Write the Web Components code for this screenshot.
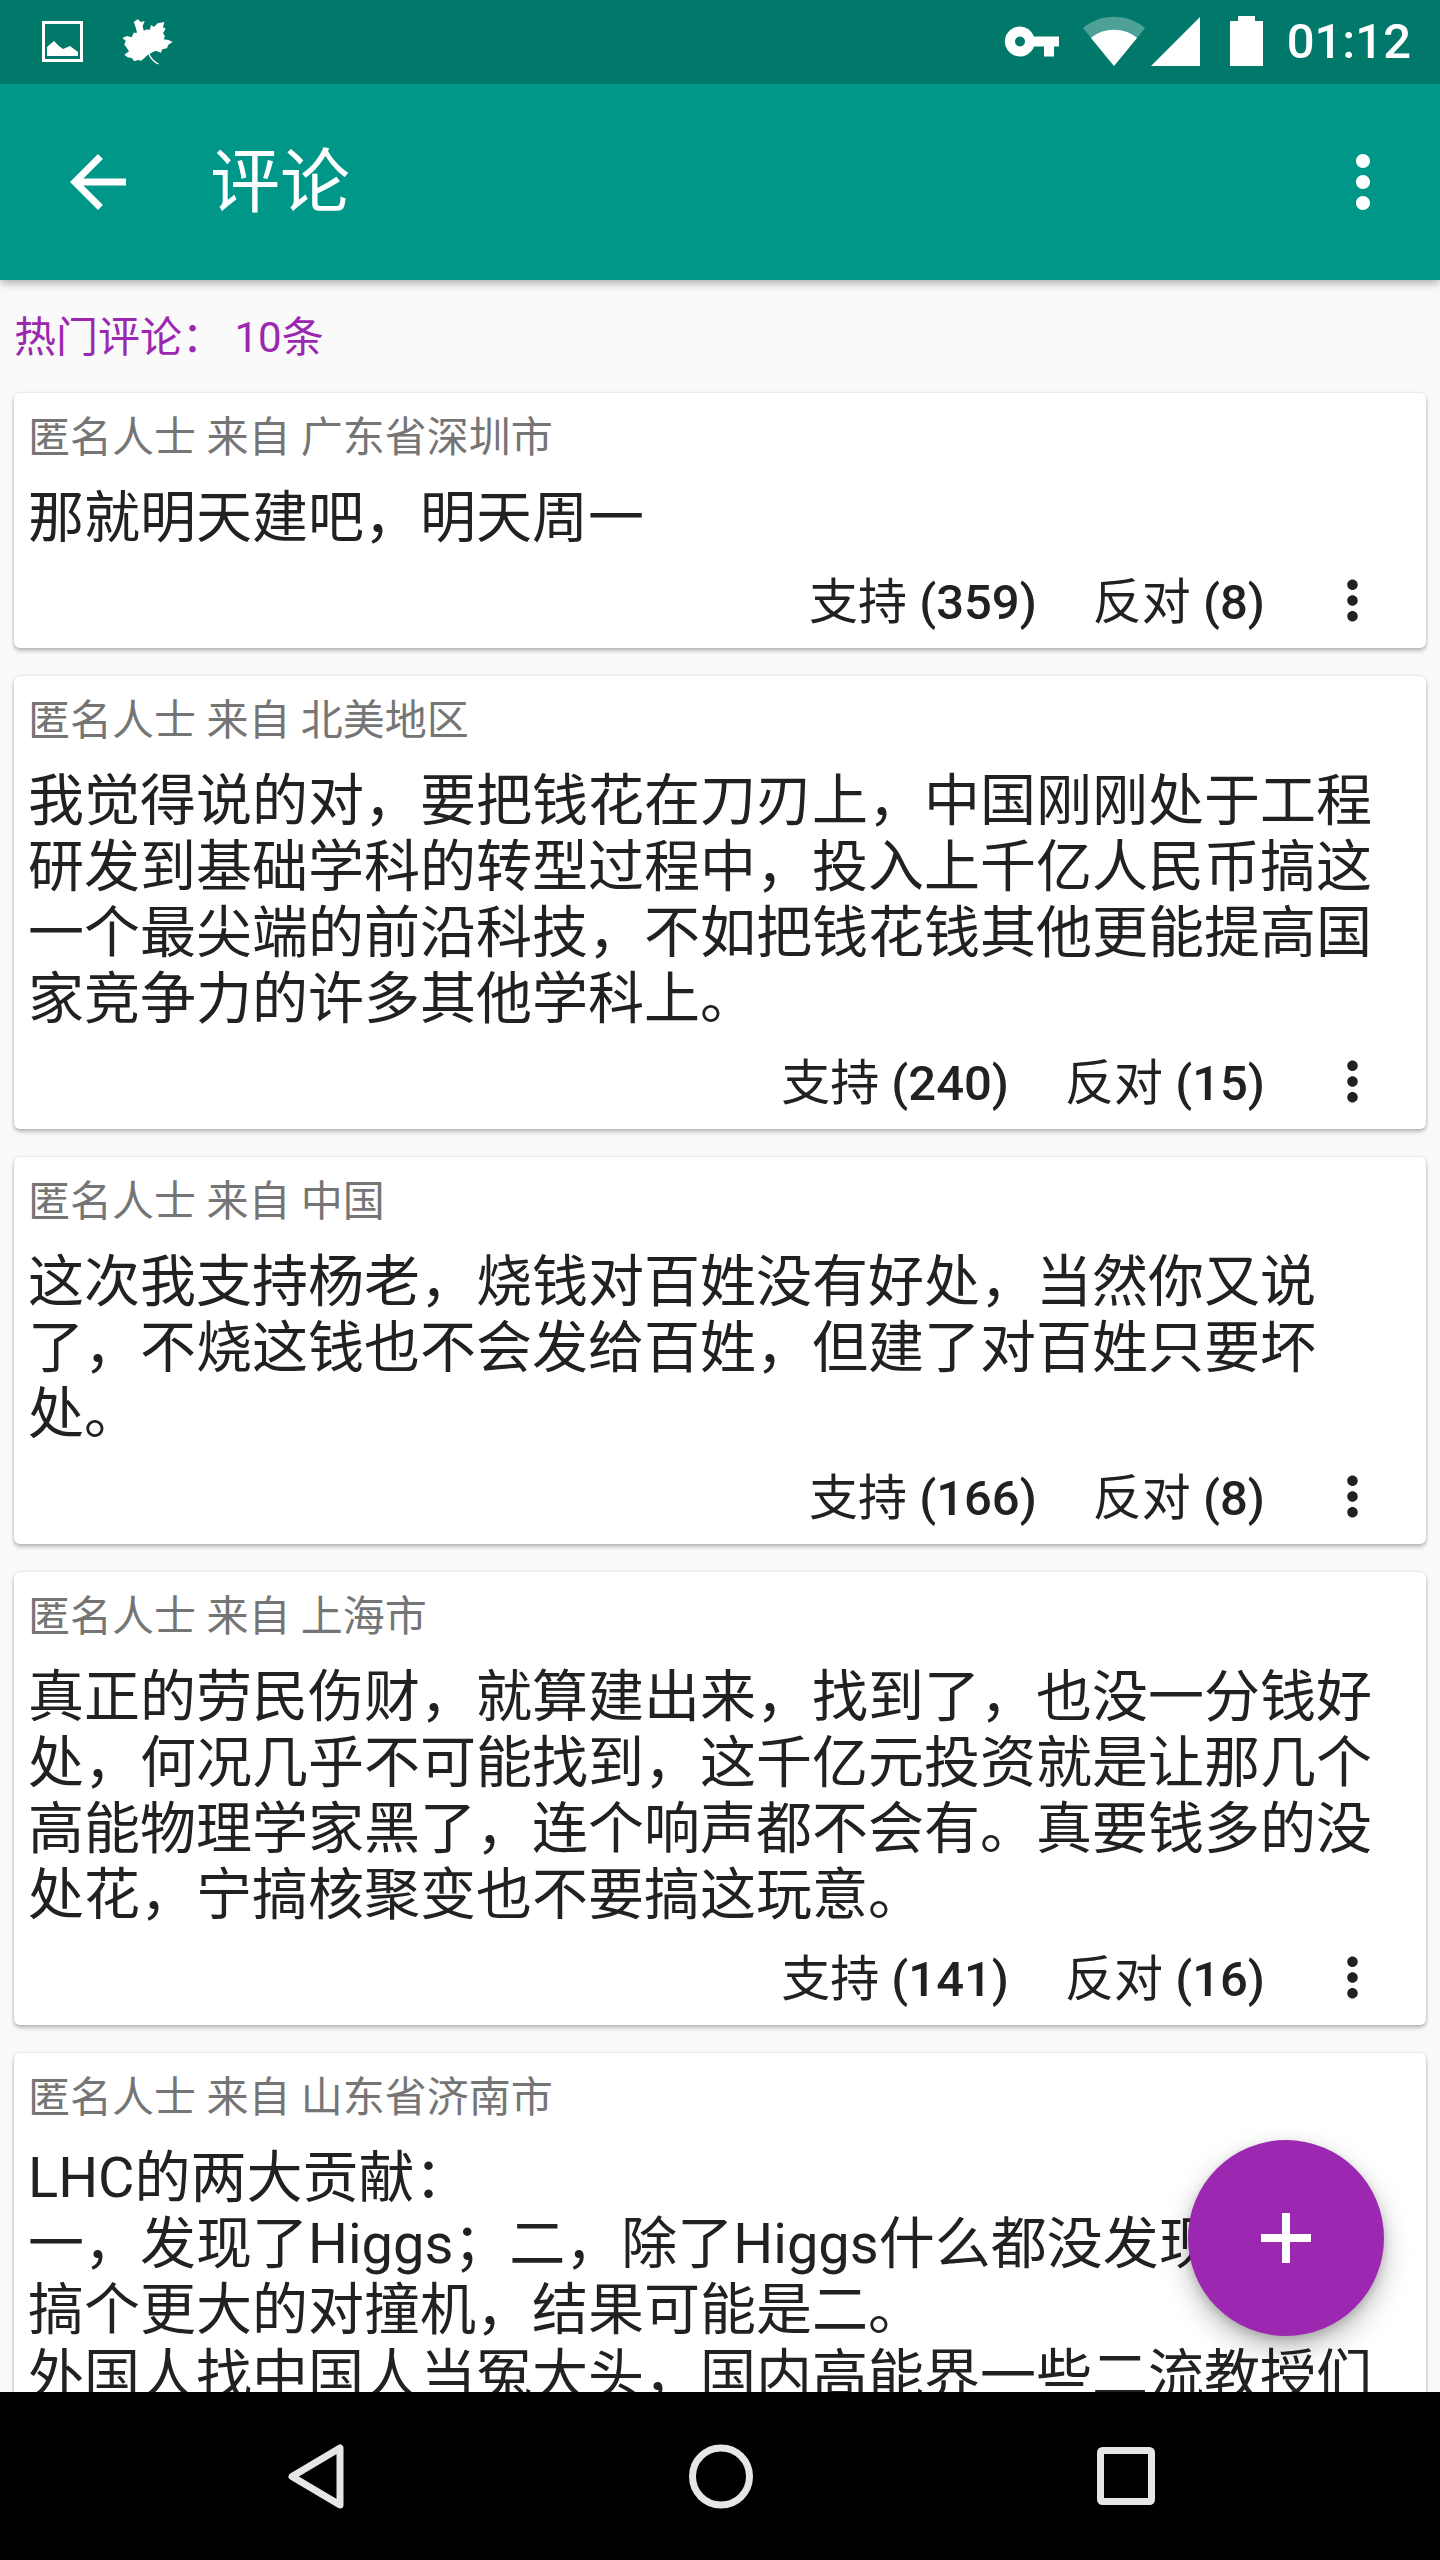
<!DOCTYPE html>
<html lang="zh">
<head>
<meta charset="utf-8">
<title>评论</title>
<style>
  html, body { margin: 0; padding: 0; background: #000; }
  body { font-family: Roboto, "Noto Sans CJK SC", sans-serif; }
</style>
</head>
<body>
<app-screen>
  <status-bar slot="top" time="01:12"></status-bar>
  <app-toolbar slot="top" titulo="评论"></app-toolbar>

  <section-label>热门评论&#xFF1A; 10条</section-label>

  <comment-card from="匿名人士 来自 广东省深圳市" up="359" down="8">那就明天建吧&#xFF0C;明天周一</comment-card>
  <comment-card from="匿名人士 来自 北美地区" up="240" down="15">我觉得说的对&#xFF0C;要把钱花在刀刃上&#xFF0C;中国刚刚处于工程研发到基础学科的转型过程中&#xFF0C;投入上千亿人民币搞这一个最尖端的前沿科技&#xFF0C;不如把钱花钱其他更能提高国家竞争力的许多其他学科上。</comment-card>
  <comment-card from="匿名人士 来自 中国" up="166" down="8">这次我支持杨老&#xFF0C;烧钱对百姓没有好处&#xFF0C;当然你又说了&#xFF0C;不烧这钱也不会发给百姓&#xFF0C;但建了对百姓只要坏处。</comment-card>
  <comment-card from="匿名人士 来自 上海市" up="141" down="16">真正的劳民伤财&#xFF0C;就算建出来&#xFF0C;找到了&#xFF0C;也没一分钱好处&#xFF0C;何况几乎不可能找到&#xFF0C;这千亿元投资就是让那几个高能物理学家黑了&#xFF0C;连个响声都不会有。真要钱多的没处花&#xFF0C;宁搞核聚变也不要搞这玩意。</comment-card>
  <comment-card from="匿名人士 来自 山东省济南市" up="98" down="7">LHC的两大贡献&#xFF1A;<br>一&#xFF0C;发现了Higgs&#xFF1B;二&#xFF0C;除了Higgs什么都没发现。<br>搞个更大的对撞机&#xFF0C;结果可能是二。<br>外国人找中国人当冤大头&#xFF0C;国内高能界一些二流教授们</comment-card>

  <fab-button slot="overlay"></fab-button>
  <nav-bar slot="bottom"></nav-bar>
</app-screen>

<script>
const MORE_PATH = 'M12 8c1.1 0 2-.9 2-2s-.9-2-2-2-2 .9-2 2 .9 2 2 2zm0 2c-1.1 0-2 .9-2 2s.9 2 2 2 2-.9 2-2-.9-2-2-2zm0 6c-1.1 0-2 .9-2 2s.9 2 2 2 2-.9 2-2-.9-2-2-2z';

class AppScreen extends HTMLElement {
  constructor() {
    super();
    this.attachShadow({ mode: 'open' });
    this.shadowRoot.innerHTML = `
    <style>
      :host { display: flex; flex-direction: column; position: relative; width: 1440px; height: 2560px; overflow: hidden; background: #fafafa; }
      .top { position: relative; z-index: 2; box-shadow: 0 3px 9px rgba(0,0,0,.32); }
      main { flex: 1; min-height: 0; overflow: hidden; padding: 0 14px; display: flex; flex-direction: column; gap: 28px; }
      .bottom { position: relative; z-index: 3; }
    </style>
    <div class="top"><slot name="top"></slot></div>
    <main><slot></slot></main>
    <slot name="overlay"></slot>
    <div class="bottom"><slot name="bottom"></slot></div>
    `;
  }
}

class StatusBar extends HTMLElement {
  constructor() {
    super();
    this.attachShadow({ mode: 'open' });
  }
  connectedCallback() {
    const time = this.getAttribute('time') || '';
    this.shadowRoot.innerHTML = `
    <style>
      :host { display: flex; align-items: center; height: 84px; background: #00796b; color: #fff; padding: 0 29px 0 42px; }
      svg { display: block; height: 84px; flex: none; fill: #fff; }
      .left { display: flex; gap: 39px; flex: 1; }
      .right { display: flex; align-items: center; }
      .time { font: 500 49px/84px Roboto, sans-serif; margin-left: 24px; }
    </style>
    <div class="left">
      <svg width="41" viewBox="0 0 41 84">
        <path fill-rule="evenodd" d="M0 21h41v41H0zM3 24v35h35V24z"/>
        <path d="M5 56V47l7-6 5 5 4 3 7-3 8 6v4z"/>
      </svg>
      <svg width="52" viewBox="275 -30 156 252">
        <path d="M322 28L332 36 343 33 337 48 340 62 350 58 358 60 362 46 372 50 382 40 402 36 398 52 406 56 398 70 404 78 400 88 414 90 427 96 414 104 410 115 396 118 392 128 376 122 364 128 352 135 340 146 332 152 322 150 312 154 304 144 292 142 282 134 296 124 288 112 282 104 286 92 276 84 290 78 304 82 310 68 320 68 316 52 310 36z"/>
        <path fill="none" stroke="#fff" stroke-width="4" d="M355 130c5 14 15 26 30 32"/>
      </svg>
    </div>
    <div class="right">
      <svg width="55" viewBox="0 0 55 84">
        <path fill-rule="evenodd" d="M16 26.500a15 15 0 0 1 14 10h25v10h-5v10H40V46.500H30a15 15 0 1 1-14-20zM16 36.500a5 5 0 1 0 .01 0z"/>
      </svg>
      <svg width="62" viewBox="0 0 62 84" style="margin-left:24px">
        <path opacity=".3" d="M31 66L0 28C18 13 44 13 62 28z"/>
        <path d="M31 66L8 38C20 27 42 27 54 38z"/>
      </svg>
      <svg width="49" viewBox="0 0 49 84" style="margin-left:6px">
        <path d="M49 17v49H0z"/>
      </svg>
      <svg width="33" viewBox="0 0 33 84" style="margin-left:30px">
        <path d="M8 16h17v5h8v45H0V21h8z"/>
      </svg>
      <span class="time">${time}</span>
    </div>
    `;
  }
}

class AppToolbar extends HTMLElement {
  constructor() {
    super();
    this.attachShadow({ mode: 'open' });
  }
  connectedCallback() {
    const titulo = this.getAttribute('titulo') || '';
    this.shadowRoot.innerHTML = `
    <style>
      :host { display: flex; align-items: center; height: 196px; background: #009688; color: #fff; padding: 0 35px 0 56px; }
      svg { display: block; width: 84px; height: 84px; fill: #fff; flex: none; }
      h1 { flex: 1; margin: 2px 0 0 70px; font: 400 70px/84px Roboto, "Noto Sans CJK SC", sans-serif; }
    </style>
    <svg viewBox="0 0 24 24"><path d="M20 11H7.830l5.590-5.590L12 4l-8 8 8 8 1.410-1.410L7.830 13H20v-2z"/></svg>
    <h1>${titulo}</h1>
    <svg viewBox="0 0 24 24"><path d="${MORE_PATH}"/></svg>
    `;
  }
}

class SectionLabel extends HTMLElement {
  constructor() {
    super();
    this.attachShadow({ mode: 'open' });
    this.shadowRoot.innerHTML = `
    <style>
      :host { display: block; flex: none; padding-top: 30px; margin-bottom: -1px; color: #9c27b0; font: 400 42px/56px Roboto, "Noto Sans CJK SC", sans-serif; }
    </style>
    <slot></slot>
    `;
  }
}

class CommentCard extends HTMLElement {
  constructor() {
    super();
    this.attachShadow({ mode: 'open' });
  }
  connectedCallback() {
    const from = this.getAttribute('from') || '';
    const up = this.getAttribute('up') || '0';
    const down = this.getAttribute('down') || '0';
    this.shadowRoot.innerHTML = `
    <style>
      :host { display: block; flex: none; background: #fff; border-radius: 6px; padding: 17px 14px 6px; box-shadow: 0 3px 4px rgba(0,0,0,.24), 0 0 3px rgba(0,0,0,.14); font-family: Roboto, "Noto Sans CJK SC", sans-serif; }
      .from { color: #757575; font-size: 42px; line-height: 56px; }
      .text { color: #212121; font-size: 56px; line-height: 66px; margin-top: 19px; }
      .actions { display: flex; align-items: center; justify-content: flex-end; height: 84px; margin-top: 7px; padding-right: 28px; color: #212121; font-size: 49px; font-weight: 500; }
      .actions b { font-weight: 400; }
      .actions span { margin-bottom: 6px; }
      .actions span + span { margin-left: 56px; }
      svg { display: block; width: 63px; height: 63px; fill: #212121; margin-left: 56px; flex: none; }
    </style>
    <div class="from">${from}</div>
    <div class="text"><slot></slot></div>
    <div class="actions">
      <span><b>支持</b> (${up})</span>
      <span><b>反对</b> (${down})</span>
      <svg viewBox="0 0 24 24"><path d="${MORE_PATH}"/></svg>
    </div>
    `;
  }
}

class FabButton extends HTMLElement {
  constructor() {
    super();
    this.attachShadow({ mode: 'open' });
    this.shadowRoot.innerHTML = `
    <style>
      :host { display: flex; align-items: center; justify-content: center; position: absolute; right: 56px; bottom: 224px; z-index: 2; width: 196px; height: 196px; border-radius: 50%; background: #9c27b0; box-shadow: 0 12px 28px rgba(0,0,0,.26), 0 4px 10px rgba(0,0,0,.16); }
      svg { display: block; width: 50px; height: 50px; fill: #fff; }
    </style>
    <svg viewBox="0 0 50 50"><path d="M21 0h8v21h21v8H29v21h-8V29H0v-8h21z"/></svg>
    `;
  }
}

class NavBar extends HTMLElement {
  constructor() {
    super();
    this.attachShadow({ mode: 'open' });
    this.shadowRoot.innerHTML = `
    <style>
      :host { display: flex; align-items: center; justify-content: center; gap: 321px; height: 168px; background: #000; }
      svg { display: block; width: 84px; height: 84px; fill: none; stroke: #e6e6e6; stroke-width: 7; stroke-linejoin: round; flex: none; }
    </style>
    <svg viewBox="0 0 84 84"><path d="M67 14v57L19 42.500z"/></svg>
    <svg viewBox="0 0 84 84"><circle cx="43" cy="42.500" r="28.500"/></svg>
    <svg viewBox="0 0 84 84"><rect x="17.500" y="16.500" width="51" height="51" rx="2"/></svg>
    `;
  }
}

customElements.define('app-screen', AppScreen);
customElements.define('status-bar', StatusBar);
customElements.define('app-toolbar', AppToolbar);
customElements.define('section-label', SectionLabel);
customElements.define('comment-card', CommentCard);
customElements.define('fab-button', FabButton);
customElements.define('nav-bar', NavBar);
</script>
</body>
</html>
